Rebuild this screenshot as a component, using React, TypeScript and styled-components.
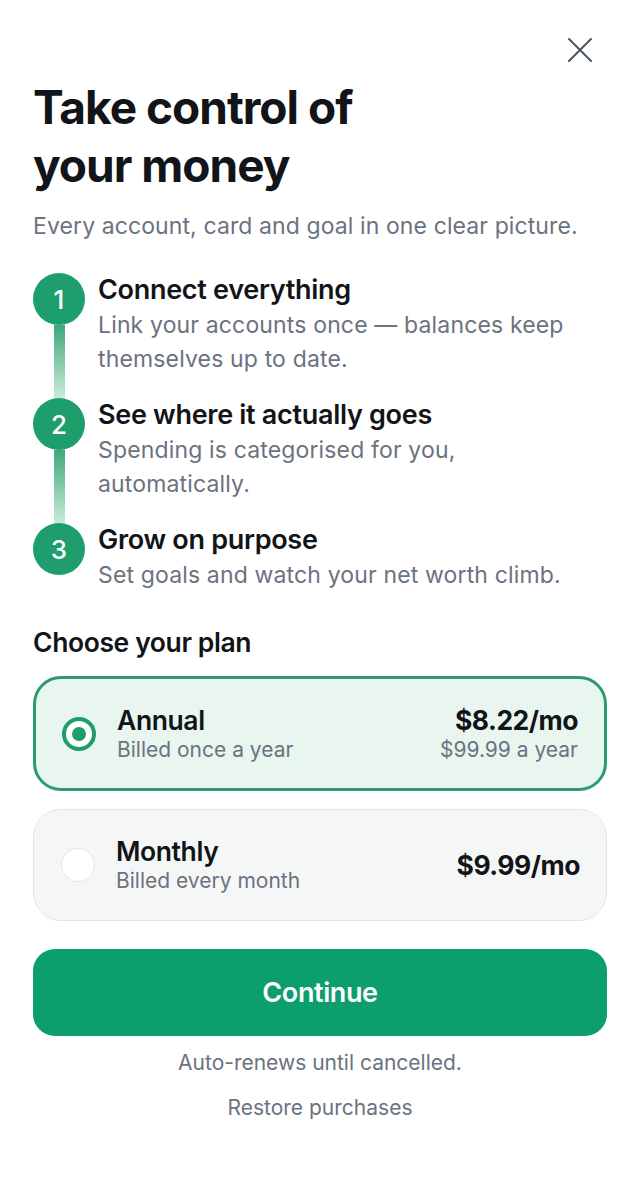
import React, { useState } from "react";
import styled, { createGlobalStyle } from "styled-components";

const GlobalStyle = createGlobalStyle`
    html, body {
        margin: 0;
        padding: 0;
        background: #ffffff;
        font-family: Inter, "Noto Sans", "Liberation Sans", sans-serif;
        color: #111418;
        -webkit-font-smoothing: antialiased;
    }
    * { box-sizing: border-box; }
`

const Page = styled.div`
    width: 640px;
    min-height: 1192px;
    padding: 38px 33px 40px 33px;
    display: flex;
    flex-direction: column;
`
const TopBar = styled.div`
    display: flex;
    justify-content: flex-end;
    padding-right: 15px;
`
const CloseButton = styled.button`
    width: 24px;
    height: 24px;
    padding: 0;
    border: none;
    background: none;
    cursor: pointer;
    display: flex;
    color: #4b5563;
`
const Title = styled.h1`
    margin: 16px 0 0 0;
    font-size: 46px;
    line-height: 58px;
    font-weight: 700;
    letter-spacing: -1px;
    color: #111418;
`
const Subtitle = styled.p`
    margin: 16px 0 0 0;
    font-size: 23px;
    line-height: 32px;
    color: #6b7280;
    letter-spacing: 0.1px;
`
const Steps = styled.div`
    margin-top: 31px;
    display: flex;
    flex-direction: column;
`
const Step = styled.div<{$last?: boolean}>`
    display: flex;
    gap: 13px;
    padding-bottom: ${p => p.$last ? "0" : "23px"};
`
const Rail = styled.div<{$last?: boolean}>`
    width: 52px;
    display: flex;
    flex-direction: column;
    align-items: center;
    margin-bottom: ${p => p.$last ? "0" : "-23px"};
`
const StepNumber = styled.div`
    width: 52px;
    height: 52px;
    flex-shrink: 0;
    border-radius: 50%;
    background: #1e9e6c;
    color: #ffffff;
    display: flex;
    align-items: center;
    justify-content: center;
    font-size: 26px;
    font-weight: 500;
`
const Connector = styled.div`
    width: 11px;
    flex: 1;
    background: linear-gradient(180deg, #3ea87d 0%, #c9ebd9 100%);
`
const StepText = styled.div`
    flex: 1;
    display: flex;
    flex-direction: column;
`
const StepTitle = styled.div`
    font-size: 27px;
    line-height: 34px;
    font-weight: 600;
    letter-spacing: -0.3px;
    color: #111418;
`
const StepDesc = styled.div`
    font-size: 23px;
    line-height: 34px;
    color: #6b7280;
    letter-spacing: 0.15px;
    margin-top: 1px;
    margin-bottom: -1px;
`
const SectionTitle = styled.h2`
    margin: 35px 0 0 0;
    font-size: 26.5px;
    line-height: 32px;
    font-weight: 600;
    letter-spacing: -0.4px;
    color: #111418;
`
const Plans = styled.div`
    margin-top: 18px;
    display: flex;
    flex-direction: column;
    gap: 18px;
`
const PlanCard = styled.button<{$selected?: boolean}>`
    width: 100%;
    height: ${p => p.$selected ? "115px" : "112px"};
    border-radius: 28px;
    border: ${p => p.$selected ? "3px solid #2f9a6f" : "1.5px solid #e3e6e8"};
    background: ${p => p.$selected ? "#e8f6ef" : "#f5f7f7"};
    padding: ${p => p.$selected ? "0 26px 0 26px" : "0 26px 0 27px"};
    display: flex;
    align-items: center;
    gap: 21px;
    font-family: inherit;
    text-align: left;
    cursor: pointer;
`
const Radio = styled.span<{$checked?: boolean}>`
    width: 34px;
    height: 34px;
    border-radius: 50%;
    flex-shrink: 0;
    background: #ffffff;
    border: ${p => p.$checked ? "4px solid #1e9e6c" : "1.5px solid #e3e6e8"};
    display: flex;
    align-items: center;
    justify-content: center;
    &::after {
        content: "";
        display: ${p => p.$checked ? "block" : "none"};
        width: 14px;
        height: 14px;
        border-radius: 50%;
        background: #1e9e6c;
    }
`
const PlanInfo = styled.span`
    flex: 1;
    display: flex;
    flex-direction: column;
`
const PlanPrice = styled.span`
    display: flex;
    flex-direction: column;
    align-items: flex-end;
`
const PlanName = styled.span`
    font-size: 26.5px;
    line-height: 32px;
    font-weight: 600;
    letter-spacing: -0.4px;
    color: #111418;
`
const PlanNote = styled.span`
    font-size: 21px;
    line-height: 28px;
    color: #6b7280;
    letter-spacing: 0;
`
const PriceMain = styled.span`
    font-size: 26.5px;
    line-height: 32px;
    font-weight: 700;
    letter-spacing: -0.5px;
    color: #111418;
`
const ContinueButton = styled.button`
    margin-top: 28px;
    width: 100%;
    height: 87px;
    border: none;
    border-radius: 22px;
    background: #0c9e6d;
    color: #ffffff;
    font-family: inherit;
    font-size: 27px;
    font-weight: 600;
    letter-spacing: -0.4px;
    cursor: pointer;
`
const FinePrint = styled.p`
    margin: 14px 0 0 0;
    text-align: center;
    font-size: 21px;
    line-height: 26px;
    color: #6b7280;
`
const LinkButton = styled.button`
    margin: 19px auto 0 auto;
    border: none;
    background: none;
    padding: 0;
    font-family: inherit;
    font-size: 21px;
    line-height: 26px;
    color: #6b7280;
    cursor: pointer;
`

const steps = [
    { title: "Connect everything", desc: ["Link your accounts once — balances keep", "themselves up to date."] },
    { title: "See where it actually goes", desc: ["Spending is categorised for you,", "automatically."] },
    { title: "Grow on purpose", desc: ["Set goals and watch your net worth climb."] },
]

const plans = [
    { id: "annual", name: "Annual", note: "Billed once a year", price: "$8.22/mo", sub: "$99.99 a year" },
    { id: "monthly", name: "Monthly", note: "Billed every month", price: "$9.99/mo", sub: "" },
]

const App = () => {
    const [plan, setPlan] = useState("annual")
    return (
        <>
            <GlobalStyle/>
            <Page>
                <TopBar>
                    <CloseButton aria-label="Close">
                        <svg width="24" height="24" viewBox="0 0 24 24" fill="none" stroke="currentColor" strokeWidth="2" strokeLinecap="round">
                            <path d="M1 1L23 23M23 1L1 23"/>
                        </svg>
                    </CloseButton>
                </TopBar>
                <Title>Take control of<br/>your money</Title>
                <Subtitle>Every account, card and goal in one clear picture.</Subtitle>
                <Steps>
                    {steps.map((s, i) => {
                        const last = i === steps.length - 1
                        return (
                            <Step key={s.title} $last={last}>
                                <Rail $last={last}>
                                    <StepNumber>{i + 1}</StepNumber>
                                    {!last && <Connector/>}
                                </Rail>
                                <StepText>
                                    <StepTitle>{s.title}</StepTitle>
                                    {s.desc.map(d => <StepDesc key={d}>{d}</StepDesc>)}
                                </StepText>
                            </Step>
                        )
                    })}
                </Steps>
                <SectionTitle>Choose your plan</SectionTitle>
                <Plans>
                    {plans.map(p => (
                        <PlanCard key={p.id} $selected={plan === p.id} onClick={() => setPlan(p.id)}>
                            <Radio $checked={plan === p.id}/>
                            <PlanInfo>
                                <PlanName>{p.name}</PlanName>
                                <PlanNote>{p.note}</PlanNote>
                            </PlanInfo>
                            <PlanPrice>
                                <PriceMain>{p.price}</PriceMain>
                                {p.sub && <PlanNote>{p.sub}</PlanNote>}
                            </PlanPrice>
                        </PlanCard>
                    ))}
                </Plans>
                <ContinueButton>Continue</ContinueButton>
                <FinePrint>Auto-renews until cancelled.</FinePrint>
                <LinkButton>Restore purchases</LinkButton>
            </Page>
        </>
    )
}

export default App
